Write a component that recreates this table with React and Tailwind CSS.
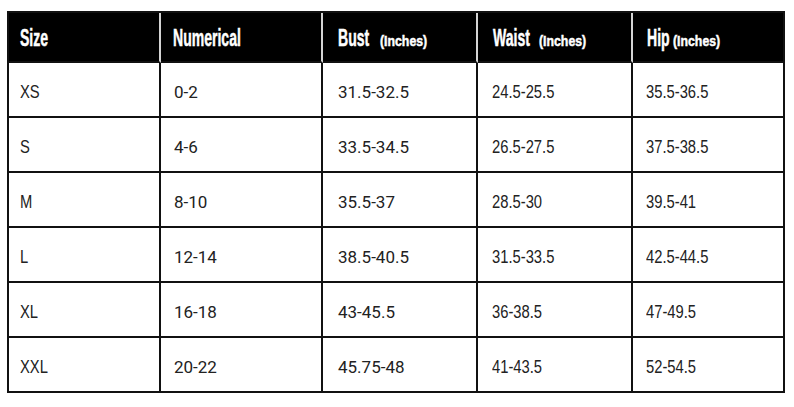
const arial = "font-['Liberation_Sans',Arial,sans-serif]";
const roboto = "font-['Roboto','Liberation_Sans',sans-serif]";

const headers = [
  { label: 'Size', w: 'w-[27px]', pad: 'pl-[11px]' },
  { label: 'Numerical', w: 'w-[71px]', pad: 'pl-[12px]' },
  { label: 'Bust', w: 'w-[31px]', pad: 'pl-[15px]', unit: true, gap: 'w-[11px]' },
  { label: 'Waist', w: 'w-[37px]', pad: 'pl-[15px]', unit: true, gap: 'w-[9px]' },
  { label: 'Hip', w: 'w-[20px]', pad: 'pl-[14px]', unit: true, gap: 'w-[6px]' },
];

const rows = [
  ['XS', '0-2', '31.5-32.5', '24.5-25.5', '35.5-36.5'],
  ['S', '4-6', '33.5-34.5', '26.5-27.5', '37.5-38.5'],
  ['M', '8-10', '35.5-37', '28.5-30', '39.5-41'],
  ['L', '12-14', '38.5-40.5', '31.5-33.5', '42.5-44.5'],
  ['XL', '16-18', '43-45.5', '36-38.5', '47-49.5'],
  ['XXL', '20-22', '45.75-48', '41-43.5', '52-54.5'],
];

// narrow columns use Arial squeezed like Arial Narrow
const bodyCols = [
  { narrow: true, pad: 'pl-[11px]' },
  { narrow: false, pad: 'pl-[13px]' },
  { narrow: false, pad: 'pl-[15px]' },
  { narrow: true, pad: 'pl-[14px]' },
  { narrow: true, pad: 'pl-[13px]' },
];

function Cell({ value, col }) {
  if (col.narrow) {
    return (
      <span className={`inline-block origin-left scale-x-[0.82] whitespace-nowrap text-[18px] ${arial}`}>
        {value}
      </span>
    );
  }
  return <span className={`text-[17px] ${roboto}`}>{value}</span>;
}

export default function App() {
  return (
    <div className="w-[794px] h-[407px] bg-white pt-[11px] pl-[7px]">
      <div className="inline-grid grid-cols-[152px_162px_155px_155px_152px] border-l-2 border-t-2 border-[#111]">
        {headers.map((h, i) => (
          <div
            key={h.label}
            className={`h-[50px] bg-black border-b-2 border-b-[#111] border-r-2 ${i === headers.length - 1 ? 'border-r-[#111]' : 'border-r-[#d4d4d4]'} flex items-baseline pt-[13px] ${h.pad} text-white font-bold [-webkit-text-stroke:0.5px_white] ${arial}`}
          >
            <span className={`${h.w} shrink-0 inline-block whitespace-nowrap text-[24px] leading-[24px]`}>
              <span className="inline-block origin-left scale-x-[0.585]">{h.label}</span>
            </span>
            {h.unit && (
              <>
                <span className={`${h.gap} shrink-0`} />
                <span className="inline-block origin-left scale-x-[0.82] text-[15px] leading-[15px] whitespace-nowrap">(Inches)</span>
              </>
            )}
          </div>
        ))}
        {rows.map((r) =>
          r.map((v, j) => (
            <div
              key={r[0] + j}
              className={`h-[55px] border-r-2 border-b-2 border-[#111] flex items-center pt-[6px] ${bodyCols[j].pad} text-[#222]`}
            >
              <Cell value={v} col={bodyCols[j]} />
            </div>
          ))
        )}
      </div>
    </div>
  );
}
